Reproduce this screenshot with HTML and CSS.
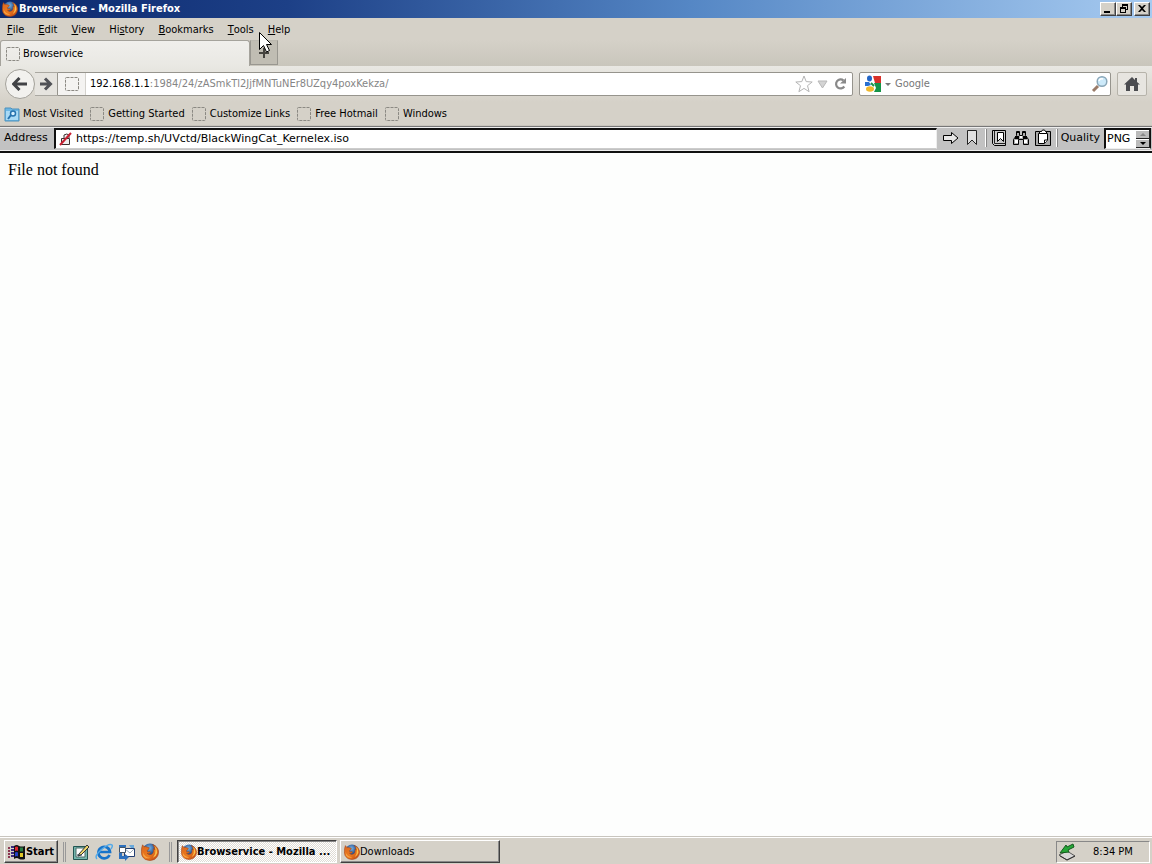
FILE: index.html
```html
<!DOCTYPE html>
<html lang="en">
<head>
<meta charset="utf-8">
<title>Browservice - Mozilla Firefox</title>
<link rel="stylesheet" href="styles.css">
</head>
<body>
<svg class="defs" aria-hidden="true">
  <defs>
    <radialGradient id="globe" cx=".45" cy=".3" r=".7"><stop offset="0" stop-color="#7cb6e4"/><stop offset=".5" stop-color="#2c5c9c"/><stop offset="1" stop-color="#142c66"/></radialGradient>
    <linearGradient id="fur" x1="0" y1="0" x2="1" y2="1"><stop offset="0" stop-color="#d9661f"/><stop offset=".55" stop-color="#ec7a1f"/><stop offset="1" stop-color="#b93c12"/></linearGradient>
    <symbol id="firefox" viewBox="0 0 16 16">
      <circle cx="8" cy="7.200" r="6.800" fill="url(#globe)"/>
      <path d="M1.400 1.600 2.800 3.400Q4.200 2.800 5.600 3.800L7.400 4.200 6.800 5.600 5.400 6.600 5.800 7.800Q6.600 8.200 8 7.600 8.800 8.200 7.800 9 6.400 9.800 5.400 9.200 7 11.200 9.600 10 11.800 8.400 11 5L12.200 6Q12.200 3.400 10.400 1.400 14.800 3 15.600 7.200 15.900 12 12 14.600 8 16.600 3.800 14.600 0 12 .3 7.400.4 4 1.400 1.600Z" fill="url(#fur)" stroke="#9c4118" stroke-width=".5"/>
      <path d="M12.200 2.800Q14.600 5 14.400 8.600 13.600 12 10.600 13.200 13.200 9.800 13 6Z" fill="#f9c04a"/>
      <path d="M1.600 8Q3 13 8.400 13.200 4.400 14.600 2 11.600Z" fill="#f5a746"/>
    </symbol>
    <symbol id="blank" viewBox="0 0 16 16"><rect x="1.500" y="1.500" width="13" height="13" rx="1" fill="none" stroke="#8b8983" stroke-dasharray="3 1"/></symbol>
  </defs>
</svg>

<header class="titlebar">
  <svg class="icon"><use href="#firefox"/></svg>
  <h1 class="title">Browservice - Mozilla Firefox</h1>
  <div class="controls">
    <button class="control" aria-label="Minimize"><svg viewBox="0 0 12 10"><path d="M2 7h6v2H2z"/></svg></button>
    <button class="control" aria-label="Restore"><svg viewBox="0 0 12 10"><path d="M4 0h6v6H8V5h1V2H5v1H4zM2 3h6v6H2zm1 2v3h4V5z" fill-rule="evenodd"/></svg></button>
    <button class="control close" aria-label="Close"><svg viewBox="0 0 12 10"><path d="M2 1h2l2 2 2-2h2L7 4.500 10 8H8L6 6 4 8H2l3-3.500z"/></svg></button>
  </div>
</header>

<div class="chrome">
  <nav class="menubar">
    <button><u>F</u>ile</button><button><u>E</u>dit</button><button><u>V</u>iew</button><button>Hi<u>s</u>tory</button><button><u>B</u>ookmarks</button><button><u>T</u>ools</button><button><u>H</u>elp</button>
  </nav>
  <div class="tabs">
    <button class="tab"><svg class="icon"><use href="#blank"/></svg>Browservice</button>
    <button class="newtab" aria-label="New tab"><svg viewBox="0 0 12 12"><path d="M5 1h2v4h4v2H7v4H5V7H1V5h4z" fill="#45443f"/></svg></button>
  </div>
  <div class="navbar">
    <button class="back" aria-label="Back"><svg viewBox="0 0 16 14"><path d="M7.500 1 1.500 7l6 6M2 7h13" fill="none" stroke="#414245" stroke-width="3"/></svg></button>
    <button class="forward" aria-label="Forward"><svg viewBox="0 0 14 14"><path d="M6 1.500 11.500 7 6 12.500M1 7h10" fill="none" stroke="#515257" stroke-width="3"/></svg></button>
    <div class="urlbar">
      <span class="site"><svg class="icon"><use href="#blank"/></svg></span>
      <label for="url">192.168.1.1</label>
      <input id="url" type="text" value=":1984/24/zASmkTl2JjfMNTuNEr8UZqy4poxKekza/">
      <button aria-label="Bookmark"><svg viewBox="0 0 18 18"><path d="m9 1 2.200 5.600 6 .4-4.700 3.700 1.600 6L9 13.400l-5.100 3.300 1.600-6L.8 7l6-.4z" fill="#fff" stroke="#b4b4b4"/></svg></button>
      <button aria-label="History"><svg viewBox="0 0 18 18"><path d="M5 6h9l-4.500 7z" fill="#d4d4d4" stroke="#b8b8b8"/></svg></button>
      <button aria-label="Reload"><svg viewBox="0 0 18 18"><path d="M12.500 5.500a4.500 4.500 0 1 0 .8 6" fill="none" stroke="#898989" stroke-width="2.200"/><path d="M9 8.500h6V3z" fill="#898989"/></svg></button>
    </div>
    <div class="searchbar">
      <button class="engine" aria-label="Search engine"><svg viewBox="0 0 28 18"><path d="M9 1h8v7h-6z" fill="#d83129"/><path d="M10 8h7v9h-7l2-4z" fill="#159448"/><path d="M1 7h4l2 3-3 1H1z" fill="#286fd0"/><ellipse cx="5.500" cy="3.500" rx="2.500" ry="3" fill="#2366c7"/><ellipse cx="6" cy="14" rx="4" ry="2.700" fill="#f0b82c"/><path d="m7 8 3 3" stroke="#159448" stroke-width="2"/><path d="M21 8h6l-3 3z" fill="#777"/></svg></button>
      <input type="search" placeholder="Google" aria-label="Search Google">
      <button aria-label="Search"><svg viewBox="0 0 18 18"><path d="m2 16 5-5" stroke="#9a7b68" stroke-width="3"/><circle cx="11" cy="6.500" r="4.800" fill="#cdeafa" stroke="#8aa7b8" stroke-width="1.500"/><path d="M8 6q1-3 4-2" fill="none" stroke="#fff" stroke-width="1.500"/></svg></button>
    </div>
    <button class="home" aria-label="Home"><svg viewBox="0 0 16 14"><path d="M8 0 0 7.500h2V14h4V9h4v5h4V7.500h2L13 5V1h-2v2z" fill="#4b4c50"/></svg></button>
  </div>
  <nav class="bookmarks">
    <a href="#"><svg class="icon" viewBox="0 0 16 16"><path d="M1 2h6l1 1h7v12H1z" fill="#6db7e4" stroke="#4d91bd"/><path d="M2 5h12v9H2z" fill="#a9daf5"/><circle cx="9" cy="7.500" r="2.500" fill="#d9f1ff" stroke="#2673ae" stroke-width="1.500"/><path d="m7 9-3 4" stroke="#2673ae" stroke-width="2"/></svg>Most Visited</a>
    <a href="#"><svg class="icon"><use href="#blank"/></svg>Getting Started</a>
    <a href="#"><svg class="icon"><use href="#blank"/></svg>Customize Links</a>
    <a href="#"><svg class="icon"><use href="#blank"/></svg>Free Hotmail</a>
    <a href="#"><svg class="icon"><use href="#blank"/></svg>Windows</a>
  </nav>
</div>

<main class="page">
  <form class="addressbar">
    <label for="address">Address</label>
    <div class="field">
      <svg viewBox="0 0 14 14"><path d="M2.500 6.500h8v6h-8zM5 6V3q3-2 5 0v3" fill="#eee" stroke="#3c3030"/><path d="M1 13 12 1" stroke="#c81f32" stroke-width="2"/></svg>
      <input id="address" type="text" value="https://temp.sh/UVctd/BlackWingCat_Kernelex.iso">
    </div>
    <div class="tools">
      <button type="button" aria-label="Go"><svg viewBox="0 0 18 18"><path d="M2.500 6.500h8v-3L17 9l-6.500 5.500v-3h-8z" fill="#e8e8e8" stroke="#000"/></svg></button>
      <button type="button" aria-label="Bookmark page"><svg viewBox="0 0 18 18"><path d="M4.500 1.500h9v14L9 11l-4.500 4.500z" fill="#e0e0e0" stroke="#222"/></svg></button>
    </div>
    <div class="tools">
      <button type="button" aria-label="Bookmarks"><svg viewBox="0 0 18 18"><path d="M2.500 1.500h13v15h-11l-2-2z" fill="#ccc" stroke="#000"/><path d="M4.500 2v12.500h11" fill="none" stroke="#222"/><path d="M7.500 3.500h6v9l-3-3-3 3z" fill="#fff" stroke="#000"/></svg></button>
      <button type="button" aria-label="Find"><svg viewBox="0 0 18 18"><path d="M4.500 2.500h3v4h3v-4h3v4l3 4v5h-5v-5h-5v5h-5v-5l3-4z" fill="#aaa" stroke="#000"/><path d="M5 2h2v2H5zm6 0h2v2h-2zM3 7h4v3H3zm8 0h4v3h-4z"/><path d="M3 11h3v3H3zm9 0h3v3h-3zM8 7h2v2H8z" fill="#fff"/></svg></button>
      <button type="button" aria-label="Clipboard"><svg viewBox="0 0 18 18"><path d="M1.500 2.500h15v14h-15z" fill="#aaa" stroke="#000"/><path d="M4.500 4.500h9v7l-3 3h-6z" fill="#fff" stroke="#000"/><path d="M10.500 14v-3H14M5.500 4.500v-2h2l1-1.500h2l1 1.500h1v2z" fill="#fff" stroke="#000"/></svg></button>
    </div>
    <label class="quality-label" for="quality">Quality</label>
    <div class="quality">
      <select id="quality"><option>PNG</option></select>
      <svg viewBox="0 0 14 18"><path d="M0 0h14v18H0z" fill="#bbb"/><path d="M0 8.500h14M0 17.500h14M13.500 0v18" stroke="#222"/><path d="M0 .5h13M0 9.500h13" stroke="#fff"/><path d="m4 6 3-3 3 3z" fill="#888"/><path d="M4 12h6l-3 3z"/></svg>
    </div>
  </form>
  <p class="message">File not found</p>
</main>

<footer class="taskbar">
  <button class="start"><svg viewBox="0 0 18 16"><path d="M0 3h2v2H0zm0 3h2v2H0zm0 3h2v2H0zm0 3h2v2H0z" fill="#8a3550"/><path d="M3 2h3v2H3zm0 3h3v2H3zm0 3h3v2H3zm0 3h3v2H3z" fill="#3b2a80"/><path d="M6 2q3-2 5 0 3 1 6 0v13q-3 1-6 0-2-2-5 0z" fill="#111"/><path d="M7 3q2-1 3 0v4q-1-1-3 0z" fill="#df2631"/><path d="M12 3.500h3v4h-3z" fill="#287f43"/><path d="M7 8.500q2-1 3 0v4q-1-1-3 0z" fill="#2440c6"/><path d="M12 9h3v4h-3z" fill="#e0c829"/></svg>Start</button>
  <div class="quick">
    <button aria-label="Show desktop"><svg viewBox="0 0 18 18"><path d="M1.500 3.500h14v13h-14z" fill="#75b6ad" stroke="#235451"/><path d="M4 5h9v9H4z" fill="#fff" stroke="#4a6b66"/><path d="m7 11 8-9 2 2-8 8-3 1z" fill="#eed66a" stroke="#333"/><path d="M5 12h5" stroke="#345"/></svg></button>
    <button aria-label="Internet Explorer"><svg viewBox="0 0 18 18"><path d="M14.500 12A5.800 5.800 0 1 1 15 9H4" fill="none" stroke="#1874ca" stroke-width="2.700"/><path d="M2 16Q-1 13 6 7 14 0 17 2q1 1-1 4" fill="none" stroke="#54aae8" stroke-width="1.500"/></svg></button>
    <button aria-label="Outlook Express"><svg viewBox="0 0 18 18"><path d="M6.500 5.500h10v8h-10z" fill="#fff" stroke="#223e72"/><path d="m7 6 5 4 4-4" fill="none" stroke="#9ab"/><path d="M1 2h7v2H4v3H1zm0 8h3v3h3v-2l4 3-4 4v-2H1z" fill="#2d70bd"/><path d="M1.500 4.500h6v5h-6z" fill="#fff" stroke="#456"/><path d="M11 2h5v3h-3z" fill="#68a8db"/></svg></button>
    <button aria-label="Firefox"><svg><use href="#firefox"/></svg></button>
  </div>
  <div class="tasks">
    <button class="task active"><svg class="icon"><use href="#firefox"/></svg>Browservice - Mozilla ...</button>
    <button class="task"><svg class="icon"><use href="#firefox"/></svg>Downloads</button>
  </div>
  <div class="tray"><svg viewBox="0 0 18 18"><path d="m1 12 8-4 8 5-8 4z" fill="#d8d8d8" stroke="#555"/><path d="m2 13 7 4 8-4" fill="none" stroke="#333"/><path d="m15 1-6 3-1-2-6 8 9-1-1-2 6-3z" fill="#26a638" stroke="#125c1c"/></svg><time>8:34 PM</time></div>
</footer>

<svg class="cursor" viewBox="0 0 13 21" aria-hidden="true"><path d="M.5.500v17l4-4 3 6.500 3-1.500-3-6h5z" fill="#fff" stroke="#000"/></svg>
</body>
</html>
```
FILE: styles.css
```css
* { box-sizing: border-box; }
body {
  --face: #d5d1c8;
  --ui: "DejaVu Sans Condensed", "Noto Sans", sans-serif;
  display: flex;
  flex-direction: column;
  min-height: 100vh;
  margin: 0;
  color: #000;
  background: #fdfefd;
  font: 11px/14px var(--ui);
}
button, input, select { margin: 0; padding: 0; border: 0; background: none; color: inherit; font: inherit; }
input { min-width: 0; flex: 1; outline: 0; }
button { display: flex; align-items: center; justify-content: center; white-space: nowrap; }
svg { display: block; flex: none; }
.defs { position: absolute; width: 0; height: 0; }
.icon { width: 16px; height: 16px; }

.titlebar {
  display: flex;
  align-items: center;
  height: 18px;
  padding: 0 2px;
  color: #fff;
  background: linear-gradient(90deg, #0b286d, #1d4087 25%, #5587c5 60%, #a6caf0);
}
.title { flex: 1; margin: 0; padding-left: 1px; font: bold 11px/14px var(--ui); }
.controls { display: flex; }
.control {
  width: 16px;
  height: 14px;
  background: var(--face);
  border: 1px solid;
  border-color: #fff #404040 #404040 #fff;
  box-shadow: inset -1px -1px #888;
}
.control svg { width: 12px; height: 10px; }
.close { margin-left: 2px; }

.chrome { background: var(--face); }
.menubar { display: flex; height: 22px; }
.menubar button { padding: 1px 7px 0; }
.tabs { display: flex; height: 26px; background: linear-gradient(#d5d1c8, #c9c6bc); }
.tab {
  width: 250px;
  justify-content: flex-start;
  gap: 2px;
  padding-left: 4px;
  background: linear-gradient(#f0efec, #e9e8e3);
  border: 1px solid #a5a39c;
  border-width: 1px 1px 0 1px;
  border-radius: 3px 3px 0 0;
}
.newtab { width: 28px; margin-bottom: 1px; background: #c0bdb3; border: 1px solid #999790; border-top-color: #bbb8af; }
.newtab svg { width: 12px; height: 12px; }

.navbar {
  display: flex;
  align-items: center;
  height: 36px;
  padding: 0 5px 1px 5px;
  background: linear-gradient(#e9e8e3, var(--face));
}
.back { z-index: 1; width: 30px; height: 30px; background: #f2f1ee; border: 1px solid #a4a29b; border-radius: 50%; }
.back svg { width: 16px; height: 14px; }
.forward { width: 22px; height: 24px; background: #e6e4df; border: 1px solid #aaa8a1; border-width: 1px 0; }
.forward svg { width: 14px; height: 14px; }
.urlbar, .searchbar { display: flex; align-items: center; height: 24px; background: #fff; border: 1px solid #96948d; border-radius: 2px; }
.urlbar { flex: 1; padding-right: 3px; border-radius: 0 2px 2px 0; }
.urlbar input { color: #858585; }
.urlbar button { width: 18px; }
.urlbar svg, .searchbar svg { height: 18px; }
.site { display: flex; align-items: center; justify-content: center; width: 28px; height: 22px; margin-right: 4px; background: #f4f3f1; border-right: 1px solid #d4d2cd; }
.site .icon { height: 16px; }
.searchbar { width: 252px; margin: 0 6px; padding: 0 1px 0 4px; }
.searchbar button { width: 18px; }
.searchbar .engine { width: 28px; margin-right: 3px; }
.searchbar input { appearance: none; }
.searchbar input::placeholder { color: #777; opacity: 1; }
.home { width: 30px; height: 24px; background: #e7e5e0; border: 1px solid #b6b3aa; border-radius: 2px; }
.home svg { width: 16px; height: 14px; }

.bookmarks { display: flex; align-items: center; gap: 6px; height: 24px; padding: 0 4px; border-bottom: 1px solid #c8c4bc; }
.bookmarks a { display: flex; align-items: center; gap: 3px; color: inherit; text-decoration: none; }

.page { flex: 1; }
.addressbar {
  display: flex;
  align-items: center;
  height: 27px;
  padding: 0 1px 2px 4px;
  background: #c2c2c2;
  border-top: 1px solid #777;
  border-bottom: 2px solid #111;
  box-shadow: inset 0 1px #eee, inset 0 -1px #eee;
  font: 11px/14px "DejaVu Sans", sans-serif;
}
.addressbar > label:first-child { width: 50px; }
.field {
  display: flex;
  align-items: center;
  flex: 1;
  gap: 3px;
  height: 21px;
  padding-left: 3px;
  background: #fff;
  border: 2px solid #111;
  border-right: 1px solid #eee;
  border-bottom: 1px solid #ccc;
}
.field svg { width: 14px; height: 14px; }
.tools { display: flex; gap: 4px; padding: 0 4px; border-right: 1px solid #fff; box-shadow: 1px 0 #888; }
.tools svg { width: 18px; height: 18px; }
.quality-label { padding: 0 4px; }
.quality { display: flex; width: 47px; height: 21px; background: #fff; border: 2px solid #111; border-right-width: 1px; border-bottom: 1px solid #eee; }
.quality select { flex: 1; min-width: 0; appearance: none; padding-left: 1px; }
.quality svg { width: 14px; height: 18px; }
.message { margin: 7px 8px; font: 16px/19px "Liberation Serif", serif; }

.taskbar { display: flex; align-items: center; height: 28px; padding: 2px 2px 0 4px; background: var(--face); border-top: 1px solid #c8c5be; box-shadow: inset 0 1px #fff; }
.start, .task {
  height: 23px;
  border: 1px solid;
  border-color: #fff #404040 #404040 #fff;
  box-shadow: inset -1px -1px #888;
}
.start { width: 54px; font-weight: bold; }
.start svg { width: 18px; height: 16px; }
.quick { display: flex; gap: 5px; margin-left: 5px; padding: 1px 10px 1px 6px; border: 3px double #999; border-width: 0 3px; }
.quick svg { width: 18px; height: 18px; }
.tasks { display: flex; flex: 1; gap: 3px; margin-left: 5px; }
.task { width: 160px; justify-content: flex-start; padding-left: 3px; }
.active {
  padding-top: 1px;
  font: bold 11px/14px var(--ui);
  background: repeating-conic-gradient(#fff 0 25%, #dfdcd5 0 50%) 0 0 / 2px 2px;
  border-color: #404040 #fff #fff #404040;
  box-shadow: inset 1px 1px #888;
}
.tray { display: flex; align-items: center; gap: 17px; width: 94px; height: 22px; padding-left: 1px; border: 1px solid; border-color: #888 #fff #fff #888; }
.tray svg { width: 18px; height: 18px; }
.cursor { position: absolute; left: 259px; top: 32px; z-index: 2; width: 13px; height: 21px; }
```
